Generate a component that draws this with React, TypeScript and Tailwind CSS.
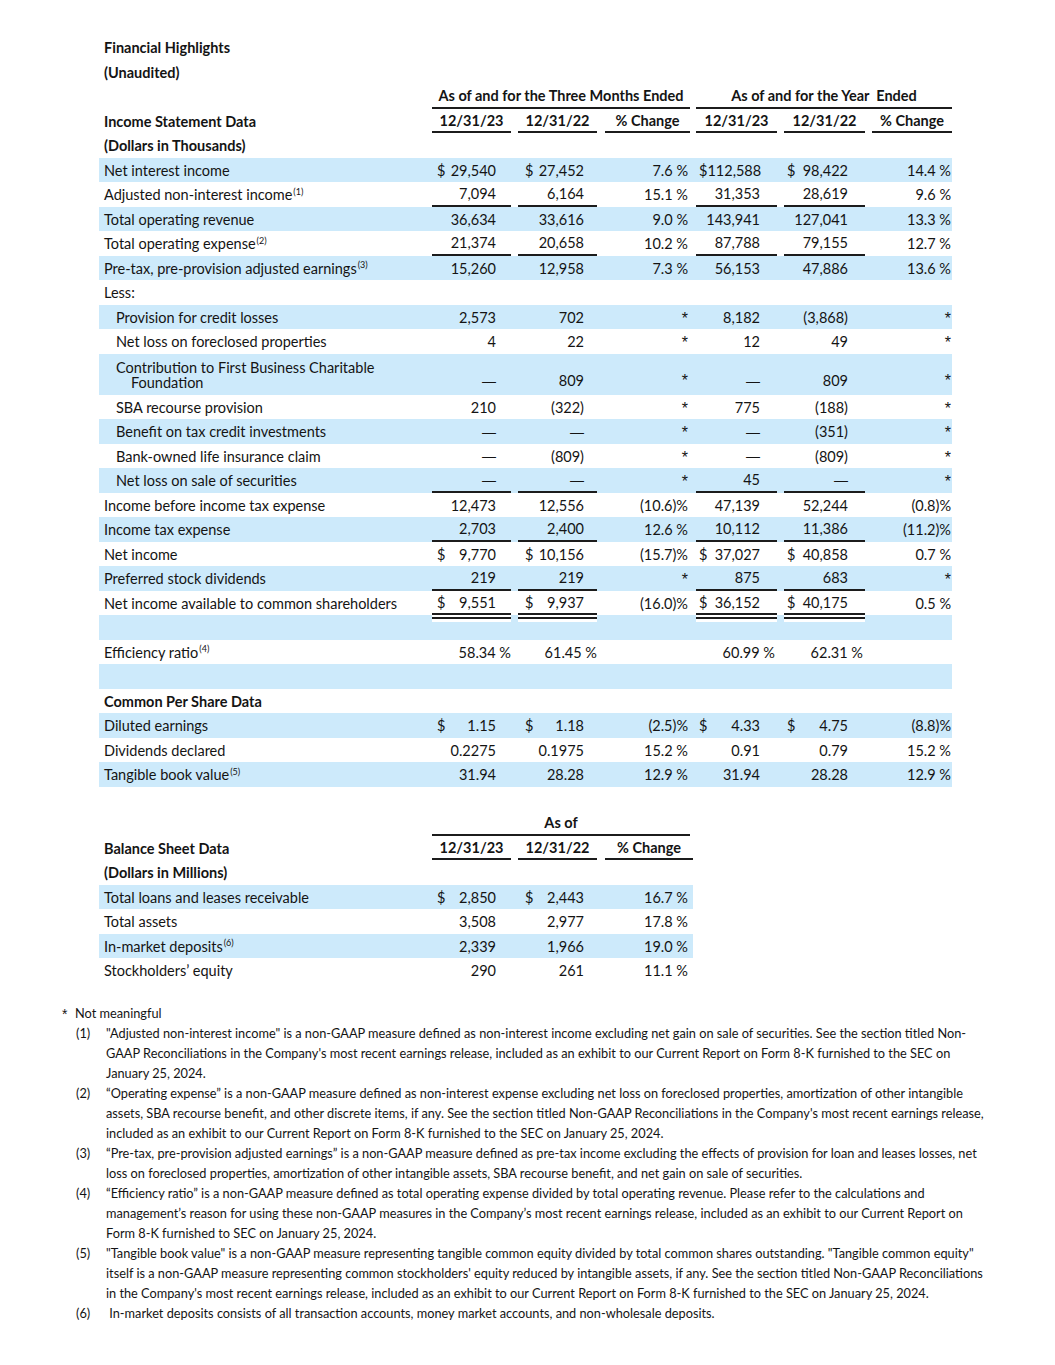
import React from "react";

type Col = { w: string; ml: string; pl: string; pr: string; ppr: string };

const COLS: Col[] = [
  { w: "w-[79px]", ml: "ml-0", pl: "pl-[5px]", pr: "pr-[15px]", ppr: "pr-0" },
  { w: "w-[86px]", ml: "ml-[7px]", pl: "pl-[7px]", pr: "pr-[13px]", ppr: "pr-0" },
  { w: "w-[93px]", ml: "ml-[8px]", pl: "pl-0", pr: "pr-[2px]", ppr: "pr-[2px]" },
  { w: "w-[87px]", ml: "ml-[6px]", pl: "pl-[3px]", pr: "pr-[17px]", ppr: "pr-[2px]" },
  { w: "w-[88px]", ml: "ml-[7px]", pl: "pl-[3px]", pr: "pr-[17px]", ppr: "pr-[2px]" },
  { w: "w-[87px]", ml: "ml-[7px]", pl: "pl-0", pr: "pr-[1px]", ppr: "pr-[1px]" },
];

const BCOLS: Col[] = [
  { w: "w-[79px]", ml: "ml-0", pl: "pl-[5px]", pr: "pr-[15px]", ppr: "pr-0" },
  { w: "w-[86px]", ml: "ml-[7px]", pl: "pl-[7px]", pr: "pr-[13px]", ppr: "pr-0" },
  { w: "w-[96px]", ml: "ml-[8px]", pl: "pl-0", pr: "pr-[5px]", ppr: "pr-[5px]" },
];

const LINE = "border-b-2 border-[#1c1c1c]";
const BLUE = "bg-[#cdeafb]";
const ALT = { fontFamily: "'Liberation Sans', Arial, sans-serif" };

function Sup({ n }: { n: number }) {
  return <sup className="text-[9px] ml-[1px] -top-[0.65em]">({n})</sup>;
}

function Glyph({ v }: { v: string }) {
  if (v === "*")
    return (
      <span className="text-[16px] relative top-[1px]" style={ALT}>
        *
      </span>
    );
  if (v === "\u2014") return <span className="text-[14px]" style={ALT}>{"\u2014"}</span>;
  return <span>{v}</span>;
}

function ValCell({ col, v, line, pct }: { col: Col; v: string; line: boolean; pct?: boolean }) {
  const dollar = v.startsWith("$");
  const num = dollar ? v.slice(1) : v;
  return (
    <div className={`${col.w} shrink-0 h-full`}>
      <div
        className={`${col.ml} h-full flex items-center pt-[2px] ${dollar ? "justify-between" : "justify-end"} ${col.pl} ${
          pct ? col.ppr : col.pr
        } ${line ? LINE : ""}`}
      >
        {dollar && <span>$</span>}
        <Glyph v={num} />
      </div>
    </div>
  );
}

type RowProps = {
  label: React.ReactNode;
  vals?: string[];
  blue?: boolean;
  u?: boolean;
  indent?: boolean;
  bold?: boolean;
  pct?: boolean;
  cols?: Col[];
  w?: string;
};

function Row({ label, vals, blue, u, indent, bold, pct, cols = COLS, w = "w-[853px]" }: RowProps) {
  return (
    <div className={`${w} h-[24.5px] flex ${blue ? BLUE : ""} ${bold ? "font-bold" : ""}`}>
      <div className={`w-[333px] shrink-0 flex items-center pt-[2px] ${indent ? "pl-[17px]" : "pl-[5px]"}`}>
        <span className="whitespace-nowrap">{label}</span>
      </div>
      {vals &&
        vals.map((v, i) => {
          const isPctCol = cols === COLS ? i === 2 || i === 5 : i === 2;
          return <ValCell key={i} col={cols[i]} v={v} line={!!u && !isPctCol} pct={pct} />;
        })}
    </div>
  );
}

function HeaderCells({ cols, labels }: { cols: Col[]; labels: string[] }) {
  return (
    <>
      {labels.map((l, i) => (
        <div key={i} className={`${cols[i].w} shrink-0 h-full`}>
          <div className={`${cols[i].ml} h-full flex items-center justify-center pt-[2px] ${LINE}`}>{l}</div>
        </div>
      ))}
    </>
  );
}

const footnotes: { m: string; lines: string[] }[] = [
  {
    m: "(1)",
    lines: [
      "\"Adjusted non-interest income\" is a non-GAAP measure defined as non-interest income excluding net gain on sale of securities. See the section titled Non-",
      "GAAP Reconciliations in the Company's most recent earnings release, included as an exhibit to our Current Report on Form 8-K furnished to the SEC on",
      "January 25, 2024.",
    ],
  },
  {
    m: "(2)",
    lines: [
      "\u201cOperating expense\u201d is a non-GAAP measure defined as non-interest expense excluding net loss on foreclosed properties, amortization of other intangible",
      "assets, SBA recourse benefit, and other discrete items, if any. See the section titled Non-GAAP Reconciliations in the Company's most recent earnings release,",
      "included as an exhibit to our Current Report on Form 8-K furnished to the SEC on January 25, 2024.",
    ],
  },
  {
    m: "(3)",
    lines: [
      "\u201cPre-tax, pre-provision adjusted earnings\u201d is a non-GAAP measure defined as pre-tax income excluding the effects of provision for loan and leases losses, net",
      "loss on foreclosed properties, amortization of other intangible assets, SBA recourse benefit, and net gain on sale of securities.",
    ],
  },
  {
    m: "(4)",
    lines: [
      "\u201cEfficiency ratio\u201d is a non-GAAP measure defined as total operating expense divided by total operating revenue. Please refer to the calculations and",
      "management\u2019s reason for using these non-GAAP measures in the Company\u2019s most recent earnings release, included as an exhibit to our Current Report on",
      "Form 8-K furnished to SEC on January 25, 2024.",
    ],
  },
  {
    m: "(5)",
    lines: [
      "\"Tangible book value\" is a non-GAAP measure representing tangible common equity divided by total common shares outstanding. \"Tangible common equity\"",
      "itself is a non-GAAP measure representing common stockholders' equity reduced by intangible assets, if any. See the section titled Non-GAAP Reconciliations",
      "in the Company's most recent earnings release, included as an exhibit to our Current Report on Form 8-K furnished to the SEC on January 25, 2024.",
    ],
  },
  {
    m: "(6)",
    lines: [" In-market deposits consists of all transaction accounts, money market accounts, and non-wholesale deposits."],
  },
];

export default function App() {
  const font = { fontFamily: "Lato, 'Liberation Sans', sans-serif" };
  return (
    <div className="w-[1055px] h-[1365px] bg-white text-[#141414] pt-[35px]" style={font}>
      <div className="ml-[99px] text-[14.5px]">
        <Row label="Financial Highlights" bold />
        <Row label="(Unaudited)" bold />
        <div className="w-[853px] h-[24.5px] flex font-bold">
          <div className="w-[333px] shrink-0" />
          <div className={`w-[258px] shrink-0 h-full flex items-center justify-center pt-[2px] ${LINE}`}>
            As of and for the Three Months Ended
          </div>
          <div className="w-[262px] shrink-0 h-full pl-[6px]">
            <div className={`h-full flex items-center justify-center pt-[2px] ${LINE}`}>
              As of and for the Year&nbsp;&nbsp;Ended
            </div>
          </div>
        </div>
        <div className="w-[853px] h-[24.5px] flex font-bold">
          <div className="w-[333px] shrink-0 flex items-center pl-[5px] pt-[2px]">Income Statement Data</div>
          <HeaderCells cols={COLS} labels={["12/31/23", "12/31/22", "% Change", "12/31/23", "12/31/22", "% Change"]} />
        </div>
        <Row label="(Dollars in Thousands)" bold />
        <Row label="Net interest income" blue vals={["$29,540", "$27,452", "7.6 %", "$112,588", "$98,422", "14.4 %"]} />
        <Row
          label={
            <>
              Adjusted non-interest income
              <Sup n={1} />
            </>
          }
          u
          vals={["7,094", "6,164", "15.1 %", "31,353", "28,619", "9.6 %"]}
        />
        <Row label="Total operating revenue" blue vals={["36,634", "33,616", "9.0 %", "143,941", "127,041", "13.3 %"]} />
        <Row
          label={
            <>
              Total operating expense
              <Sup n={2} />
            </>
          }
          u
          vals={["21,374", "20,658", "10.2 %", "87,788", "79,155", "12.7 %"]}
        />
        <Row
          label={
            <>
              Pre-tax, pre-provision adjusted earnings
              <Sup n={3} />
            </>
          }
          blue
          vals={["15,260", "12,958", "7.3 %", "56,153", "47,886", "13.6 %"]}
        />
        <Row label="Less:" />
        <Row label="Provision for credit losses" indent blue vals={["2,573", "702", "*", "8,182", "(3,868)", "*"]} />
        <Row label="Net loss on foreclosed properties" indent vals={["4", "22", "*", "12", "49", "*"]} />
        <div className={`w-[853px] h-[41px] flex ${BLUE}`}>
          <div className="w-[333px] shrink-0 pl-[17px] pt-[6px] leading-[15px]">
            <div>Contribution to First Business Charitable</div>
            <div className="pl-[15px]">Foundation</div>
          </div>
          {["\u2014", "809", "*", "\u2014", "809", "*"].map((v, i) => (
            <div key={i} className={`${COLS[i].w} shrink-0 h-full`}>
              <div className={`${COLS[i].ml} h-full flex items-end pb-[3px] justify-end ${COLS[i].pr}`}>
                <Glyph v={v} />
              </div>
            </div>
          ))}
        </div>
        <Row label="SBA recourse provision" indent vals={["210", "(322)", "*", "775", "(188)", "*"]} />
        <Row
          label="Benefit on tax credit investments"
          indent
          blue
          vals={["\u2014", "\u2014", "*", "\u2014", "(351)", "*"]}
        />
        <Row label="Bank-owned life insurance claim" indent vals={["\u2014", "(809)", "*", "\u2014", "(809)", "*"]} />
        <Row
          label="Net loss on sale of securities"
          indent
          blue
          u
          vals={["\u2014", "\u2014", "*", "45", "\u2014", "*"]}
        />
        <Row label="Income before income tax expense" vals={["12,473", "12,556", "(10.6)%", "47,139", "52,244", "(0.8)%"]} />
        <Row label="Income tax expense" blue u vals={["2,703", "2,400", "12.6 %", "10,112", "11,386", "(11.2)%"]} />
        <Row label="Net income" vals={["$9,770", "$10,156", "(15.7)%", "$37,027", "$40,858", "0.7 %"]} />
        <Row label="Preferred stock dividends" blue u vals={["219", "219", "*", "875", "683", "*"]} />
        <Row
          label="Net income available to common shareholders"
          u
          vals={["$9,551", "$9,937", "(16.0)%", "$36,152", "$40,175", "0.5 %"]}
        />
        <div className={`w-[853px] h-[24.5px] flex ${BLUE}`}>
          <div className="w-[333px] shrink-0" />
          {COLS.map((c, i) => (
            <div key={i} className={`${c.w} shrink-0 h-full`}>
              {i !== 2 && i !== 5 && (
                <div className={`${c.ml} h-[7px] bg-white pt-[2px]`}>
                  <div className="h-[2px] bg-[#1c1c1c]" />
                </div>
              )}
            </div>
          ))}
        </div>
        <Row
          label={
            <>
              Efficiency ratio
              <Sup n={4} />
            </>
          }
          pct
          vals={["58.34 %", "61.45 %", "", "60.99 %", "62.31 %", ""]}
        />
        <Row label="" blue />
        <Row label="Common Per Share Data" bold />
        <Row label="Diluted earnings" blue vals={["$1.15", "$1.18", "(2.5)%", "$4.33", "$4.75", "(8.8)%"]} />
        <Row label="Dividends declared" vals={["0.2275", "0.1975", "15.2 %", "0.91", "0.79", "15.2 %"]} />
        <Row
          label={
            <>
              Tangible book value
              <Sup n={5} />
            </>
          }
          blue
          vals={["31.94", "28.28", "12.9 %", "31.94", "28.28", "12.9 %"]}
        />

        <div className="h-[24.5px]" />
        <div className="w-[594px] h-[24.5px] flex font-bold">
          <div className="w-[333px] shrink-0" />
          <div className={`w-[258px] shrink-0 h-full flex items-center justify-center pt-[2px] ${LINE}`}>As of</div>
        </div>
        <div className="w-[594px] h-[24.5px] flex font-bold">
          <div className="w-[333px] shrink-0 flex items-center pl-[5px] pt-[2px]">Balance Sheet Data</div>
          <HeaderCells cols={BCOLS} labels={["12/31/23", "12/31/22", "% Change"]} />
        </div>
        <Row label="(Dollars in Millions)" bold w="w-[594px]" />
        <Row
          label="Total loans and leases receivable"
          blue
          cols={BCOLS}
          w="w-[594px]"
          vals={["$2,850", "$2,443", "16.7 %"]}
        />
        <Row label="Total assets" cols={BCOLS} w="w-[594px]" vals={["3,508", "2,977", "17.8 %"]} />
        <Row
          label={
            <>
              In-market deposits
              <Sup n={6} />
            </>
          }
          blue
          cols={BCOLS}
          w="w-[594px]"
          vals={["2,339", "1,966", "19.0 %"]}
        />
        <Row label={"Stockholders\u2019 equity"} cols={BCOLS} w="w-[594px]" vals={["290", "261", "11.1 %"]} />
      </div>

      <div className="mt-[20.5px] text-[12.75px] leading-[20px]">
        <div className="flex">
          <span className="ml-[62px] w-[13px] text-[14px] relative top-[1px]" style={ALT}>
            *
          </span>
          <span>Not meaningful</span>
        </div>
        {footnotes.map((f) => (
          <div key={f.m} className="flex">
            <span className="ml-[76px] w-[30px] shrink-0">{f.m}</span>
            <div>
              {f.lines.map((l, i) => (
                <div key={i} className="whitespace-pre">
                  {l}
                </div>
              ))}
            </div>
          </div>
        ))}
      </div>
    </div>
  );
}
